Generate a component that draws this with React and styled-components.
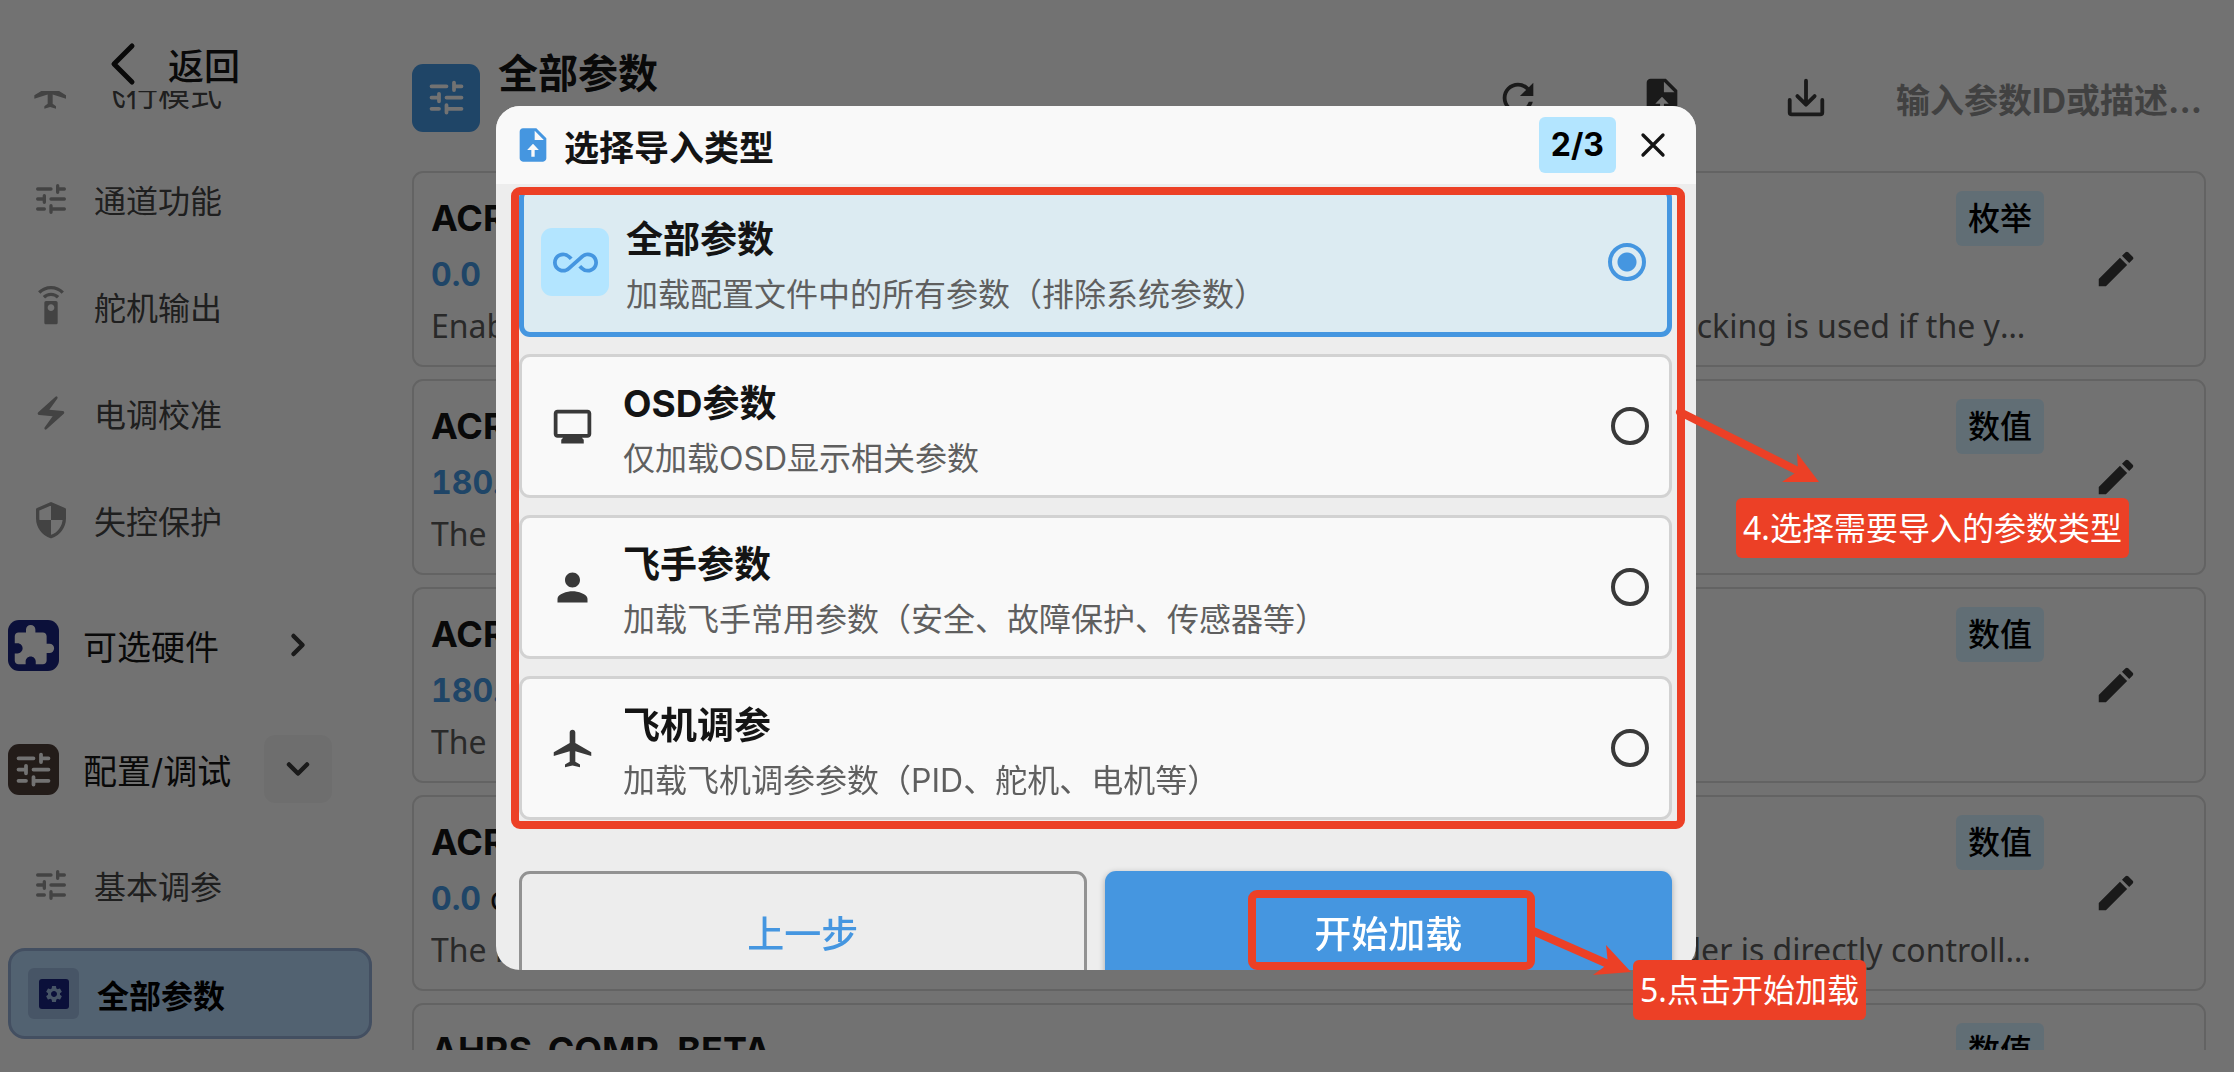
import { useState } from "react";
import styled, { createGlobalStyle } from "styled-components";
import {
  MdAirplanemodeActive,
  MdAllInclusive,
  MdEdit,
  MdElectricBolt,
  MdExtension,
  MdFlight,
  MdMonitor,
  MdPerson,
  MdRefresh,
  MdSettings,
  MdSettingsRemote,
} from "react-icons/md";

const params = [
  {
    id: "ACRO_LOCKING",
    value: "0.0",
    unit: "",
    type: "枚举",
    description:
      "Enable attitude locking when sticks are released. If set to 2 then quaternion based locking is used if the yaw rate controller is enabled.",
  },
  {
    id: "ACRO_PITCH_RATE",
    value: "180.0",
    unit: "deg/s",
    type: "数值",
    description: "The maximum pitch rate at full stick deflection in ACRO mode",
  },
  {
    id: "ACRO_ROLL_RATE",
    value: "180.0",
    unit: "deg/s",
    type: "数值",
    description: "The maximum roll rate at full stick deflection in ACRO mode",
  },
  {
    id: "ACRO_YAW_RATE",
    value: "0.0",
    unit: "deg/s",
    type: "数值",
    description:
      "The maximum yaw rate at full stick deflection in ACRO mode. If this is zero then rudder is directly controlled by rudder stick input.",
  },
  {
    id: "AHRS_COMP_BETA",
    value: "0.1",
    unit: "",
    type: "数值",
    description: "This controls the time constant for the cross-over frequency",
  },
];

const importTypes = [
  {
    key: "all",
    icon: <MdAllInclusive />,
    title: "全部参数",
    description: "加载配置文件中的所有参数（排除系统参数）",
  },
  {
    key: "osd",
    icon: <MdMonitor />,
    title: "OSD参数",
    description: "仅加载OSD显示相关参数",
  },
  {
    key: "pilot",
    icon: <MdPerson />,
    title: "飞手参数",
    description: "加载飞手常用参数（安全、故障保护、传感器等）",
  },
  {
    key: "plane",
    icon: <MdAirplanemodeActive />,
    title: "飞机调参",
    description: "加载飞机调参参数（PID、舵机、电机等）",
  },
];

function TuneIcon() {
  return (
    <svg viewBox="0 0 24 24" fill="none" stroke="currentColor" strokeWidth="2" strokeLinecap="round">
      <path d="M4 6h8M16 4v4M16 6h4" />
      <path d="M4 12h4M8 10v4M12 12h8" />
      <path d="M4 18h4M12 16v4M12 18h8" />
    </svg>
  );
}

function ShieldIcon() {
  return (
    <svg viewBox="0 0 24 24" fill="currentColor">
      <path
        d="M12 2.2l8 3.5V11c0 5-3.4 9.700-8 11-4.600-1.300-8-6-8-11V5.700z"
        fill="none"
        stroke="currentColor"
        strokeWidth="2"
        strokeLinejoin="round"
      />
      <path d="M12 2.200l8 3.500V12h-8zM12 12v10c-4.500-1.300-7.800-5.500-8-10z" />
    </svg>
  );
}

function FileUploadIcon() {
  return (
    <svg viewBox="0 0 24 24" fill="currentColor">
      <path
        fillRule="evenodd"
        d="M14 2H6c-1.100 0-2 .9-2 2v16c0 1.100.9 2 2 2h12c1.100 0 2-.9 2-2V8zM13 3.500V9h5.500zM11 19v-4H8.500l3.500-3.700 3.500 3.700H13v4z"
      />
    </svg>
  );
}

function DownloadIcon() {
  return (
    <svg
      viewBox="0 0 24 24"
      fill="none"
      stroke="currentColor"
      strokeWidth="2"
      strokeLinecap="round"
      strokeLinejoin="round"
    >
      <path d="M12 3v12M7.500 11l4.500 4.500 4.500-4.500M3.500 13v6.500a1 1 0 0 0 1 1h15a1 1 0 0 0 1-1V13" />
    </svg>
  );
}

function LineIcon({ d, size, width }) {
  return (
    <svg
      viewBox="0 0 24 24"
      width={size}
      height={size}
      fill="none"
      stroke="currentColor"
      strokeWidth={width}
      strokeLinecap="round"
      strokeLinejoin="round"
    >
      <path d={d} />
    </svg>
  );
}

export default function App() {
  const [importType, setImportType] = useState("all");

  return (
    <>
      <GlobalStyle />
      <Page>
        <Sidebar>
          <BackButton type="button">
            <LineIcon d="M17 3l-9 9 9 9" size={48} width={2.5} />
            <span>返回</span>
          </BackButton>
          <Nav>
            <NavGroup>
              <NavItem href="#mode">
                <NavIcon><MdFlight /></NavIcon>
                飞行模式
              </NavItem>
              <NavItem href="#channel">
                <NavIcon><TuneIcon /></NavIcon>
                通道功能
              </NavItem>
              <NavItem href="#servo">
                <NavIcon><MdSettingsRemote /></NavIcon>
                舵机输出
              </NavItem>
              <NavItem href="#esc">
                <NavIcon><MdElectricBolt /></NavIcon>
                电调校准
              </NavItem>
              <NavItem href="#failsafe">
                <NavIcon><ShieldIcon /></NavIcon>
                失控保护
              </NavItem>
            </NavGroup>

            <GroupHeader>
              <GroupIcon color="#1a237e"><MdExtension /></GroupIcon>
              <GroupName>可选硬件</GroupName>
              <GroupToggle type="button" aria-label="展开">
                <LineIcon d="M9 6l6 6-6 6" size={36} width={3} />
              </GroupToggle>
            </GroupHeader>
            <GroupHeader>
              <GroupIcon color="#4e3d38"><TuneIcon /></GroupIcon>
              <GroupName>配置/调试</GroupName>
              <GroupToggle type="button" aria-label="收起" $open>
                <LineIcon d="M6 9l6 6 6-6" size={36} width={3} />
              </GroupToggle>
            </GroupHeader>

            <NavItem href="#basic">
              <NavIcon><TuneIcon /></NavIcon>
              基本调参
            </NavItem>
            <NavItem href="#all" $active>
              <NavIcon $active><GearTile><MdSettings /></GearTile></NavIcon>
              全部参数
            </NavItem>
          </Nav>
        </Sidebar>

        <Main>
          <Toolbar>
            <PageIcon><TuneIcon /></PageIcon>
            <PageTitle>全部参数</PageTitle>
            <Tools>
              <ToolButton type="button" aria-label="刷新"><MdRefresh /></ToolButton>
              <ToolButton type="button" aria-label="导入"><FileUploadIcon /></ToolButton>
              <ToolButton type="button" aria-label="导出"><DownloadIcon /></ToolButton>
            </Tools>
            <Search type="text" aria-label="搜索" placeholder="输入参数ID或描述..." />
          </Toolbar>
          <ParamList>
            {params.map((param) => (
              <ParamCard key={param.id}>
                <ParamText>
                  <ParamHead>
                    <ParamId>{param.id}</ParamId>
                    <TypeBadge>{param.type}</TypeBadge>
                  </ParamHead>
                  <ParamValue>
                    <strong>{param.value}</strong> {param.unit}
                  </ParamValue>
                  <ParamDescription>{param.description}</ParamDescription>
                </ParamText>
                <EditButton type="button" aria-label="编辑"><MdEdit /></EditButton>
              </ParamCard>
            ))}
          </ParamList>
        </Main>
      </Page>

      <Overlay>
        <DialogFrame>
          <Dialog role="dialog" aria-labelledby="dialog-title">
            <DialogHeader>
              <FileUploadIcon />
              <h2 id="dialog-title">选择导入类型</h2>
              <Step>2/3</Step>
              <CloseButton type="button" aria-label="关闭">
                <LineIcon d="M6 6l12 12M18 6L6 18" size={40} width={2} />
              </CloseButton>
            </DialogHeader>
            <DialogBody>
              {importTypes.map((type) => (
                <Option key={type.key} $selected={importType === type.key}>
                  <OptionIcon $selected={importType === type.key}>{type.icon}</OptionIcon>
                  <OptionText>
                    <OptionTitle>{type.title}</OptionTitle>
                    <OptionDescription>{type.description}</OptionDescription>
                  </OptionText>
                  <Radio
                    type="radio"
                    name="importType"
                    checked={importType === type.key}
                    onChange={() => setImportType(type.key)}
                  />
                </Option>
              ))}
              <Actions>
                <ActionButton type="button">上一步</ActionButton>
                <ActionButton type="button" $primary>开始加载</ActionButton>
              </Actions>
            </DialogBody>
          </Dialog>

          {/* tutorial marks drawn over the dialog */}
          <Marks viewBox="0 0 1400 900" fill="none">
            <rect x="19" y="85" width="1166" height="634" rx="5" stroke="#ec4026" strokeWidth="8" />
            <rect x="756" y="788" width="279" height="72" rx="5" stroke="#ec4026" strokeWidth="8" />
            <path d="M1184 306l122 61M1037 825l84 37" stroke="#ec4026" strokeWidth="8" strokeLinecap="round" />
            <path d="M1323 376l-22-29 1 18-16 11zM1135 866l-25-27 2 19-15 11z" fill="#ec4026" />
          </Marks>
          <Callout $left={1240} $top={392}>4.选择需要导入的参数类型</Callout>
          <Callout $left={1137} $top={854}>5.点击开始加载</Callout>
        </DialogFrame>
      </Overlay>
    </>
  );
}

const GlobalStyle = createGlobalStyle`
  * {
    box-sizing: border-box;
  }

  body {
    margin: 0;
    background-color: #f9f9f9;
    color: #141414;
    font-family: Inter, "Noto Sans CJK SC", sans-serif;
    font-size: 32px;
    overflow: hidden;
  }

  button, input {
    font-family: inherit;
    font-size: inherit;
    color: inherit;
    border: none;
    background: none;
    padding: 0;
    margin: 0;
  }

  h1, h2, h3, p {
    margin: 0;
  }

  svg {
    display: block;
    flex-shrink: 0;
  }
`;

const Page = styled.div`
  display: flex;
  height: 100vh;
`;

const Sidebar = styled.aside`
  display: flex;
  flex-direction: column;
  width: 412px;
  flex-shrink: 0;
`;

const BackButton = styled.button`
  display: flex;
  align-items: center;
  gap: 22px;
  height: 91px;
  flex-shrink: 0;
  padding: 36px 0 0 98px;
  line-height: 50px;
  font-size: 36px;
  font-weight: 500;

  span {
    padding-top: 6px;
  }
`;

const Nav = styled.nav`
  flex: 1;
  min-height: 0;
  display: flex;
  flex-direction: column;
  justify-content: flex-end;
  padding: 0 40px 25px 8px;
  overflow: hidden;
`;

const NavGroup = styled.div`
  display: flex;
  flex-direction: column;
  padding-bottom: 10px;
`;

const NavItem = styled.a`
  display: flex;
  align-items: center;
  gap: 18px;
  height: 91px;
  margin: ${(props) => (props.$active ? "10px 0 8px" : "8px 0")};
  flex-shrink: 0;
  padding: 0 17px;
  border: ${(props) => (props.$active ? "3px solid #92acd3" : "none")};
  border-radius: 17px;
  background-color: ${(props) => (props.$active ? "#b4d5f6" : "transparent")};
  color: ${(props) => (props.$active ? "#000" : "#444")};
  font-weight: ${(props) => (props.$active ? 700 : 400)};
  text-decoration: none;
`;

const NavIcon = styled.span`
  display: flex;
  align-items: center;
  justify-content: center;
  width: 51px;
  height: 51px;
  border-radius: 6px;
  background-color: ${(props) => (props.$active ? "#9cb9de" : "transparent")};
  color: #929292;

  > svg {
    width: 40px;
    height: 40px;
  }
`;

const GearTile = styled.span`
  display: flex;
  align-items: center;
  justify-content: center;
  width: 30px;
  height: 30px;
  border-radius: 3px;
  background-color: #1a237e;
  color: #9cb9de;

  svg {
    width: 20px;
    height: 20px;
  }
`;

const GroupHeader = styled.div`
  display: flex;
  align-items: center;
  height: 124px;
  flex-shrink: 0;
`;

const GroupIcon = styled.span`
  display: flex;
  align-items: center;
  justify-content: center;
  width: 51px;
  height: 51px;
  border-radius: 11px;
  background-color: ${(props) => props.color};
  color: #f9f9f9;

  svg {
    width: 45px;
    height: 45px;
  }
`;

const GroupName = styled.span`
  width: 181px;
  margin-left: 24px;
  color: #141414;
  font-size: 34px;
  white-space: nowrap;
`;

const GroupToggle = styled.button`
  display: flex;
  align-items: center;
  justify-content: center;
  width: 68px;
  height: 68px;
  border-radius: 11px;
  background-color: ${(props) => (props.$open ? "#f0f0f0" : "transparent")};
  color: #393939;
`;

const Main = styled.main`
  flex: 1;
  min-width: 0;
  display: flex;
  flex-direction: column;
  padding: 28px 28px 22px 0;
`;

const Toolbar = styled.header`
  display: flex;
  align-items: center;
  height: 143px;
  flex-shrink: 0;
  padding-bottom: 4px;
`;

const PageIcon = styled.span`
  display: flex;
  align-items: center;
  justify-content: center;
  width: 68px;
  height: 68px;
  border-radius: 11px;
  background-color: #4596e0;
  color: #f9f9f9;

  svg {
    width: 45px;
    height: 45px;
  }
`;

const PageTitle = styled.h1`
  margin-left: 18px;
  align-self: flex-start;
  padding-top: 16px;
  line-height: 60px;
  font-size: 40px;
`;

const Tools = styled.div`
  display: flex;
  gap: 98px;
  margin-left: auto;
  margin-right: 67px;
`;

const ToolButton = styled.button`
  color: #393939;

  svg {
    width: 46px;
    height: 46px;
  }
`;

const Search = styled.input`
  width: 310px;
  padding-top: 6px;
  line-height: 52px;
  font-size: 34px;
  font-weight: 700;

  &::placeholder {
    color: #8f8f8f;
    opacity: 1;
  }
`;

const ParamList = styled.section`
  flex: 1;
  min-height: 0;
  overflow: hidden;
  display: flex;
  flex-direction: column;
  gap: 12px;
`;

const ParamCard = styled.article`
  display: flex;
  align-items: center;
  height: 196px;
  flex-shrink: 0;
  padding: 0 65px 0 17px;
  border: 2px solid #d8d8d8;
  border-radius: 11px;
`;

const ParamText = styled.div`
  flex: 1;
  min-width: 0;
  padding-right: 49px;
`;

const ParamHead = styled.div`
  display: flex;
  align-items: center;
  justify-content: space-between;
`;

const ParamId = styled.h3`
  line-height: 58px;
  font-size: 36px;
`;

const TypeBadge = styled.span`
  padding: 0 12px;
  border-radius: 6px;
  background-color: #d3efff;
  color: #000;
  line-height: 55px;
  font-weight: 500;
`;

const ParamValue = styled.p`
  line-height: 56px;

  strong {
    color: #4596e0;
    font-variant-numeric: tabular-nums;
  }
`;

const ParamDescription = styled.p`
  margin-right: 8px;
  font-family: "Noto Sans", "Noto Sans CJK SC", sans-serif;
  line-height: 46px;
  color: #5b5b5b;
  white-space: nowrap;
  overflow: hidden;
  text-overflow: ellipsis;
`;

const EditButton = styled.button`
  color: #393939;

  svg {
    width: 46px;
    height: 46px;
  }
`;

const Overlay = styled.div`
  position: fixed;
  inset: 0;
  display: flex;
  justify-content: center;
  padding: 106px 42px 102px 0;
  background-color: rgba(0, 0, 0, 0.54);
`;

const DialogFrame = styled.div`
  position: relative;
  width: 100%;
  max-width: 1200px;
`;

const Dialog = styled.section`
  height: 100%;
  display: flex;
  flex-direction: column;
  border-radius: 24px;
  background-color: #ededed;
  overflow: hidden;
`;

const DialogHeader = styled.header`
  display: flex;
  align-items: center;
  height: 78px;
  flex-shrink: 0;
  padding: 0 23px 0 17px;
  background-color: #f9f9f9;

  > svg {
    width: 40px;
    height: 40px;
    color: #4596e0;
  }

  h2 {
    margin-left: 11px;
    padding-top: 6px;
    line-height: 52px;
    font-size: 35px;
  }
`;

const Step = styled.span`
  margin-left: auto;
  padding: 0 12px;
  border-radius: 6px;
  background-color: #b3e5ff;
  color: #000;
  line-height: 56px;
  font-weight: 700;
`;

const CloseButton = styled.button`
  margin-left: 17px;
  color: #141414;
`;

const DialogBody = styled.div`
  flex: 1;
  min-height: 0;
  display: flex;
  flex-direction: column;
  gap: 17px;
  padding: 3px 24px 0 23px;
  overflow: hidden;
`;

const Option = styled.label`
  display: flex;
  align-items: center;
  gap: 17px;
  flex-shrink: 0;
  padding: ${(props) => (props.$selected ? "17px" : "16px")};
  border: ${(props) => (props.$selected ? "5px solid #4596e0" : "3px solid #d2d2d2")};
  border-radius: 11px;
  background-color: ${(props) => (props.$selected ? "#dcebf2" : "#f9f9f9")};
`;

const OptionIcon = styled.span`
  display: flex;
  align-items: center;
  justify-content: center;
  width: 68px;
  height: 68px;
  border-radius: 11px;
  background-color: ${(props) => (props.$selected ? "#b3e5ff" : "transparent")};
  color: ${(props) => (props.$selected ? "#4596e0" : "#393939")};

  svg {
    width: 45px;
    height: 45px;
  }
`;

const OptionText = styled.div`
  flex: 1;
`;

const OptionTitle = styled.h3`
  padding-bottom: 4px;
  line-height: 62px;
  font-size: 37px;
`;

const OptionDescription = styled.p`
  line-height: 40px;
  color: #5f5f5f;
`;

const Radio = styled.input`
  appearance: none;
  width: 38px;
  height: 38px;
  margin: 4px;
  border: 4px solid #393939;
  border-radius: 50%;

  &:checked {
    border-color: #4596e0;
    background: radial-gradient(circle, #4596e0 9px, transparent 10px);
  }
`;

const Actions = styled.div`
  display: grid;
  grid-template-columns: 1fr 1fr;
  gap: 18px;
  padding-top: 34px;
`;

const ActionButton = styled.button`
  height: 122px;
  border: ${(props) => (props.$primary ? "none" : "3px solid #929292")};
  border-radius: 11px;
  background-color: ${(props) => (props.$primary ? "#4596e0" : "transparent")};
  box-shadow: ${(props) => (props.$primary ? "0 2px 6px rgba(0, 0, 0, 0.3)" : "none")};
  color: ${(props) => (props.$primary ? "#fff" : "#4596e0")};
  font-size: 37px;
  font-weight: 500;
`;

const Marks = styled.svg`
  position: absolute;
  top: 0;
  left: 0;
  width: 1400px;
  height: 900px;
  pointer-events: none;
`;

const Callout = styled.span`
  position: absolute;
  left: ${(props) => props.$left}px;
  top: ${(props) => props.$top}px;
  padding: 0 7px;
  border-radius: 6px;
  background-color: #ec4026;
  color: #fff;
  font-family: "Noto Sans", "Noto Sans CJK SC", sans-serif;
  line-height: 60px;
  white-space: nowrap;
`;
